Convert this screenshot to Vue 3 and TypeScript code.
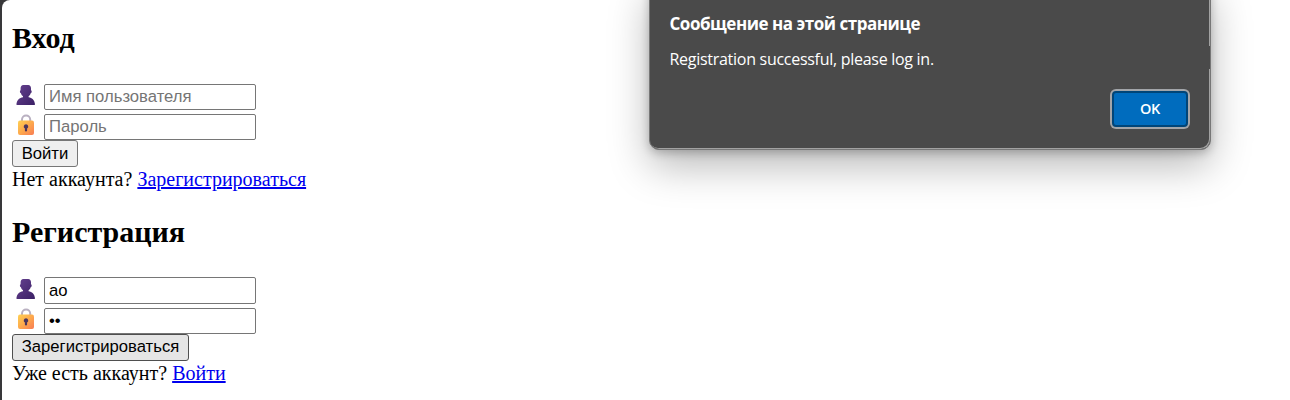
<script setup lang="ts">
interface Panel {
  key: string
  title: string
  user: string
  password: string
  action: string
  question: string
  link: string
}

const panels: Panel[] = [
  { key: 'login', title: 'Вход', user: '', password: '', action: 'Войти', question: 'Нет аккаунта?', link: 'Зарегистрироваться' },
  { key: 'register', title: 'Регистрация', user: 'ao', password: 'ao', action: 'Зарегистрироваться', question: 'Уже есть аккаунт?', link: 'Войти' },
]
</script>

<template>
  <div class="window">
    <main class="page">
      <section v-for="p in panels" :key="p.key" :class="['panel', p.key]">
        <h2>{{ p.title }}</h2>
        <label class="row">
          <svg class="icon user" width="20" height="22" viewBox="0 0 20 22">
            <defs>
              <linearGradient :id="p.key + '-bust'" x1="0" y1="0" x2="1" y2="1">
                <stop offset="0" stop-color="#65418f" />
                <stop offset="1" stop-color="#3b2065" />
              </linearGradient>
            </defs>
            <path :fill="`url(#${p.key}-bust)`" d="M7.300 1H12.200C14 1 15 2.400 15 4.200V6.300Q15.800 6.600 15.700 7.700Q15.600 8.900 14.700 9.200Q14.300 11.200 12.600 12.300V13.300C16 13.800 18.500 15.800 19 20.300Q19 21 18.400 21H1Q.400 21 .400 20.300C1 15.800 3.500 13.800 7 13.300V12.300Q5.300 11.200 4.900 9.200Q4 8.900 3.900 7.700Q3.800 6.600 4.600 6.300V4.200C4.600 2.300 5.600 1 7.300 1Z" />
          </svg>
          <input class="field" type="text" placeholder="Имя пользователя" :value="p.user" />
        </label>
        <label class="row">
          <svg class="icon" width="20" height="22" viewBox="0 0 20 22">
            <defs>
              <linearGradient :id="p.key + '-lock'" x1="0" y1="0" x2="1" y2="1">
                <stop offset="0" stop-color="#ffd052" />
                <stop offset=".5" stop-color="#fda94d" />
                <stop offset="1" stop-color="#f87c54" />
              </linearGradient>
            </defs>
            <path d="M6 8V5.500A4.100 4.100 0 0 1 14.200 5.500V8" fill="none" stroke="#b9b0c1" stroke-width="2" />
            <rect x="2" y="6.500" width="16" height="14.500" rx="2" :fill="`url(#${p.key}-lock)`" />
            <path d="M10 10.200A2.300 2.300 0 0 0 8.900 14.500V16.400A1.100 1.100 0 0 0 11.100 16.400V14.500A2.300 2.300 0 0 0 10 10.200Z" fill="#4b365d" />
          </svg>
          <input class="field" type="password" placeholder="Пароль" :value="p.password" />
        </label>
        <button class="action" type="button">{{ p.action }}</button>
        <p class="switch">{{ p.question }} <a href="#">{{ p.link }}</a></p>
      </section>
    </main>

    <div class="dialog" role="alertdialog">
      <strong class="dialog-title">Сообщение на этой странице</strong>
      <p class="dialog-text">Registration successful, please log in.</p>
      <button class="ok" type="button">OK</button>
      <i class="edge"></i>
    </div>
  </div>
</template>

<style>
body {
  margin: 0;
  overflow: hidden;
}
</style>

<style scoped>
.window {
  position: relative;
  height: 400px;
  overflow: hidden;
  box-sizing: border-box;
  padding-left: 2px;
  background: #38383a;
  font-family: "Liberation Serif", "Times New Roman", serif;
}
.page {
  box-sizing: border-box;
  height: 420px;
  padding: 21px 0 0 10px;
  background: #fff;
  border-radius: 8px 0 0 0;
}
.panel {
  display: flex;
  flex-direction: column;
  align-items: flex-start;
  height: 194px;
}
h2 {
  margin: 0 0 29px;
  font-size: 30px;
  line-height: 34px;
  white-space: nowrap;
}
.row {
  display: flex;
  height: 26px;
  margin-bottom: 4px;
}
.row + .row {
  margin-bottom: 0;
}
.register h2 {
  margin-bottom: 28px;
}
.register .row {
  height: 27px;
}
.register .row + .row {
  height: 26px;
}
.icon {
  display: block;
  margin: 0 8px 0 4px;
}
.register .user {
  margin-top: 1px;
}
.field {
  display: block;
  box-sizing: border-box;
  width: 212px;
  height: 100%;
  margin: 0;
  padding: 0 4px;
  border: 1px solid #767676;
  border-radius: 2px;
  outline: none;
  background: #fff;
  color: #000;
  font: 16.67px "Liberation Sans", Arial, sans-serif;
}
.field::placeholder {
  color: #757575;
}
.action {
  box-sizing: border-box;
  height: 27px;
  width: 66px;
  padding: 0;
  border: 1px solid #767676;
  border-radius: 3px;
  background: #efefef;
  color: #000;
  font: 16.67px "Liberation Sans", Arial, sans-serif;
  white-space: nowrap;
}
.register .action {
  width: 177px;
  padding-bottom: 1px;
  border-color: #4f4f4f;
  background: #e5e5e5;
}
.switch {
  margin: 1px 0 0;
  font-size: 20px;
  line-height: 23px;
  white-space: nowrap;
}
.switch a {
  color: #0000ee;
}
.dialog {
  position: absolute;
  left: 649px;
  top: -20px;
  box-sizing: border-box;
  width: 562px;
  height: 170px;
  padding: 31px 20px 0 19.500px;
  border: 1px solid #777;
  border-radius: 10px;
  background: #4a4a4a;
  box-shadow: inset -1px -1px 0 #a2a2a2, 0 16px 40px rgba(0, 0, 0, .28), 0 3px 10px rgba(0, 0, 0, .22);
  display: flex;
  flex-direction: column;
  color: #fff;
  font-family: "Open Sans", "Noto Sans", sans-serif;
}
.dialog-title {
  font-size: 17px;
  line-height: 24px;
  letter-spacing: -.47px;
  white-space: nowrap;
}
.dialog-text {
  margin: 11px 0 0;
  font-size: 16px;
  line-height: 24px;
  letter-spacing: -.28px;
  white-space: nowrap;
}
.ok {
  align-self: flex-end;
  box-sizing: border-box;
  width: 76px;
  height: 36px;
  margin: 20px 2px 0 0;
  padding: 0 0 1px;
  border: 2px solid #004578;
  border-radius: 4px;
  background: #006cbe;
  box-shadow: 0 0 0 2px #a2a5a9;
  color: #fff;
  font: 600 14.500px "Open Sans", "Noto Sans", sans-serif;
  letter-spacing: -.3px;
}
.edge {
  position: absolute;
  right: 0;
  top: 65px;
  width: 1px;
  height: 23px;
  background: #4a4a4a;
}
</style>
